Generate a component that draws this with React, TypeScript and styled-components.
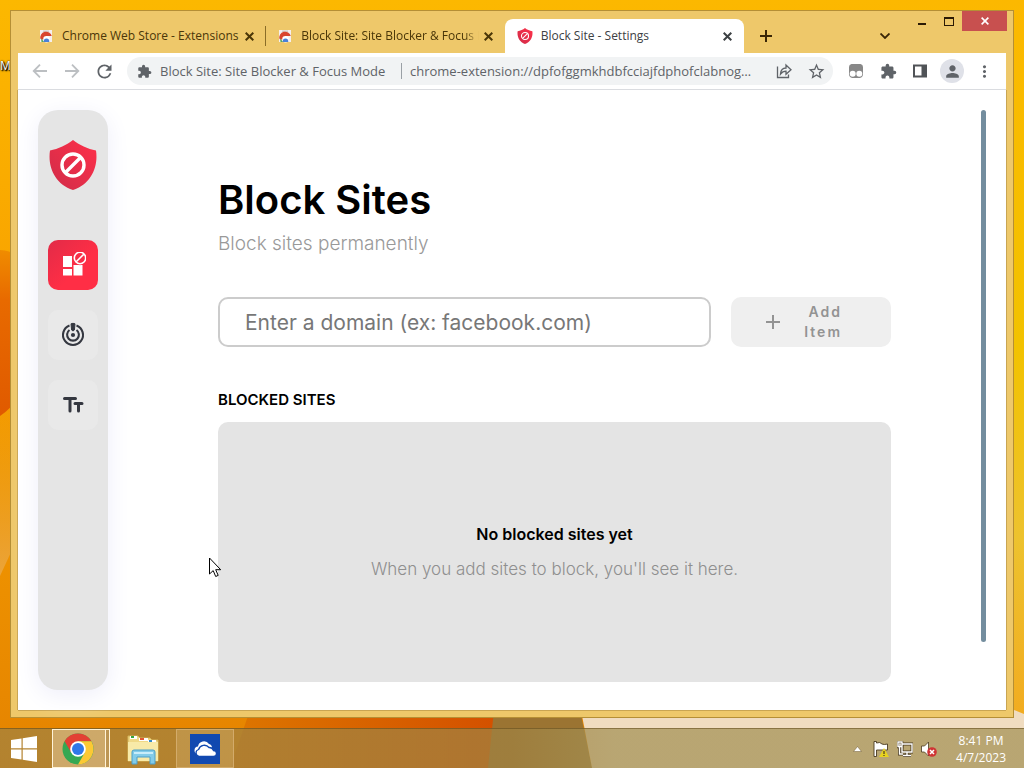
import React from "react";
import styled, { createGlobalStyle } from "styled-components";
import { MdExtension, MdStarBorder, MdMoreVert, MdPerson, MdRefresh } from "react-icons/md";

const Global = createGlobalStyle`
  * { box-sizing: border-box; }
  html, body { margin: 0; padding: 0; }
  button, input { font: inherit; color: inherit; }
  button { border: 0; padding: 0; background: none; cursor: pointer; }
  h1, h2, p { margin: 0; }
`;

const Desktop = styled.div`
  position: relative;
  min-height: 100vh;
  display: flex;
  flex-direction: column;
  overflow: hidden;
  background: #f7a800;
  font-family: "Open Sans", "Noto Sans", sans-serif;
`;

const Wallpaper = styled.svg`
  position: absolute;
  inset: 0;
  width: 100%;
  height: 100%;
`;

const ShortcutLabel = styled.span`
  position: absolute;
  left: 0;
  top: 58px;
  width: 10px;
  overflow: hidden;
  color: #fff;
  font-size: 12px;
  line-height: 16px;
  text-shadow: 1px 1px 1px #000, 1px 1px 2px #000, 0 0 2px #000;
`;

const Workspace = styled.main`
  position: relative;
  flex: 1;
  display: flex;
  padding: 10px;
`;

const BrowserWindow = styled.section`
  flex: 1;
  min-width: 0;
  display: flex;
  flex-direction: column;
  padding: 0 7px 7px;
  border: 1px solid #b58f35;
  background: #eec86a;
`;

const TitleBar = styled.header`
  display: flex;
  height: 42px;
  margin-right: -1px;
  padding-left: 8px;
`;

const TabList = styled.div`
  flex: 0 1 718px;
  min-width: 0;
  display: flex;
  align-items: flex-end;
`;

const Tab = styled.div<{ $active?: boolean }>`
  position: relative;
  flex: 1;
  min-width: 0;
  height: 34px;
  display: flex;
  align-items: center;
  padding: 0 8px 0 12px;
  border-radius: 8px 8px 0 0;
  background: ${(p) => (p.$active ? "#fff" : "transparent")};
  color: ${(p) => (p.$active ? "#3c4043" : "#4a3608")};
`;

const TabDivider = styled.span`
  width: 1px;
  height: 20px;
  margin: 0 -1px 7px 0;
  background: #8a6d27;
`;

const TabTitle = styled.button<{ $fade?: boolean }>`
  flex: 1;
  min-width: 0;
  margin: 0 2px 0 8px;
  overflow: hidden;
  white-space: nowrap;
  text-align: left;
  font-size: 12px;
  line-height: 18px;
  mask-image: ${(p) => (p.$fade ? "linear-gradient(90deg, #000 92%, transparent)" : "none")};
`;

const IconButton = styled.button<{ $size?: number; $color?: string }>`
  flex: none;
  display: grid;
  place-items: center;
  width: ${(p) => p.$size ?? 16}px;
  height: ${(p) => p.$size ?? 16}px;
  color: ${(p) => p.$color ?? "inherit"};
`;

const TabTools = styled.div`
  flex: 1;
  display: flex;
  align-items: center;
  justify-content: space-between;
  padding: 8px 13px 0 8px;
  color: #3a2606;
`;

const WindowControls = styled.div`
  display: flex;
  align-items: flex-start;
  color: #2b1a04;
`;

const WindowButton = styled.button<{ $close?: boolean }>`
  display: grid;
  place-items: center;
  width: ${(p) => (p.$close ? 45 : 27)}px;
  height: 20px;
  background: ${(p) => (p.$close ? "#c8504f" : "transparent")};
  color: ${(p) => (p.$close ? "#fff" : "inherit")};
`;

const Toolbar = styled.div`
  display: flex;
  align-items: center;
  height: 37px;
  padding: 0 10px 0 7px;
  background: #fff;
  border-bottom: 1px solid #dadce0;
  color: #5f6368;
`;

const NavButtons = styled.div`
  display: flex;
  gap: 2px;
  margin-right: 8px;
`;

const Omnibox = styled.div`
  flex: 1;
  min-width: 0;
  height: 28px;
  display: flex;
  align-items: center;
  gap: 8px;
  padding: 0 5px 0 10px;
  border-radius: 14px;
  background: #f1f3f4;
  font-size: 13px;
  line-height: 20px;
  white-space: nowrap;
`;

const SiteName = styled.span`
  flex: 0 0 242px;
  border-right: 1px solid #9aa0a6;
  line-height: 16px;
`;

const Address = styled.input`
  flex: 1;
  min-width: 0;
  height: 20px;
  margin-right: 8px;
  padding: 0;
  border: 0;
  outline: 0;
  background: transparent;
  text-overflow: ellipsis;
`;

const ToolbarActions = styled.div`
  display: flex;
  align-items: center;
  gap: 8px;
  margin-left: 11px;
`;

const Avatar = styled.button`
  display: grid;
  place-items: center;
  width: 24px;
  height: 24px;
  border-radius: 50%;
  background: #dfe1e8;
`;

const Page = styled.div`
  flex: 1;
  display: flex;
  padding: 20px;
  background: #fff;
  box-shadow: -1px 0 #c9a552, 1px 0 #c9a552, 0 1px #c9a552;
  font-family: Inter, "Liberation Sans", sans-serif;
`;

const Sidebar = styled.nav`
  flex: none;
  width: 70px;
  display: flex;
  flex-direction: column;
  align-items: center;
  gap: 20px;
  padding: 30px 10px;
  border-radius: 20px;
  background: #e5e5e5;
  box-shadow: 0 5px 25px #eeeefa;
`;

const Brand = styled.a`
  height: 50px;
  margin-bottom: 30px;
`;

const NavItem = styled.button<{ $active?: boolean }>`
  display: grid;
  place-items: center;
  width: 50px;
  height: 50px;
  border-radius: 10px;
  color: ${(p) => (p.$active ? "#fff" : "#343740")};
  background: ${(p) => (p.$active ? "linear-gradient(135deg, #e22b48, #ff2e45 60%)" : "#e9e9e9")};
`;

const Content = styled.div`
  flex: 1;
  min-width: 0;
  display: flex;
  flex-direction: column;
  padding: 60px 90px 8px 110px;
`;

const Title = styled.h1`
  font-size: 40px;
  line-height: 60px;
  font-weight: 600;
  color: #000;
`;

const Subtitle = styled.p`
  margin-bottom: 39px;
  font-size: 19px;
  line-height: 28px;
  font-weight: 300;
  color: #999;
`;

const AddForm = styled.form`
  display: flex;
  gap: 20px;
  margin-bottom: 40px;
`;

const DomainInput = styled.input`
  flex: 1;
  min-width: 0;
  height: 50px;
  padding: 0 25px;
  border: 2px solid #ccc;
  border-radius: 10px;
  outline: 0;
  background: #fff;
  font-size: 21px;
  &::placeholder { color: #777; opacity: 1; }
`;

const AddButton = styled.button`
  flex: none;
  width: 160px;
  height: 50px;
  display: flex;
  align-items: center;
  justify-content: space-between;
  padding: 0 49px 0 34px;
  border-radius: 10px;
  background: #efefef;
  color: #939393;
  font-size: 14px;
  line-height: 20px;
  font-weight: 600;
  letter-spacing: 2px;
  text-align: right;
`;

const AddLabel = styled.span`
  width: 44px;
`;

const SectionTitle = styled.h2`
  margin-bottom: 10px;
  font-size: 15px;
  line-height: 25px;
  font-weight: 600;
  color: #000;
`;

const EmptyState = styled.section`
  flex: 1;
  display: flex;
  flex-direction: column;
  align-items: center;
  justify-content: center;
  gap: 10px;
  border-radius: 10px;
  background: #e4e4e4;
  line-height: 25px;
`;

const EmptyTitle = styled.p`
  font-size: 16px;
  font-weight: 600;
  color: #000;
`;

const EmptyText = styled.p`
  font-size: 17px;
  font-weight: 300;
  color: #8f8f8f;
`;

const ScrollThumb = styled.div`
  flex: none;
  width: 5px;
  margin-bottom: 48px;
  border-radius: 3px;
  background: #738d9e;
`;

const Taskbar = styled.footer`
  position: relative;
  height: 40px;
  display: flex;
  align-items: stretch;
  border-top: 1px solid rgba(90, 65, 20, 0.5);
  background: linear-gradient(90deg, rgba(160, 130, 65, 0.72) 50%, rgba(163, 145, 85, 0.72) 60%);
`;

const TaskButton = styled.button<{ $state?: "front" | "open" }>`
  width: ${(p) => (p.$state ? 58 : 48)}px;
  display: grid;
  place-items: center;
  padding-right: ${(p) => (p.$state === "front" ? 6 : 0)}px;
  border: 1px solid ${(p) => (p.$state === "front" ? "#fff3d8" : p.$state === "open" ? "#d3ab6a" : "transparent")};
  background: ${(p) => (p.$state === "front" ? "rgba(255,240,215,.35)" : p.$state === "open" ? "rgba(255,235,200,.16)" : "none")};
  box-shadow: ${(p) => (p.$state === "front" ? "inset -3px 0 #bd9654, inset -4px 0 #fff3d8" : "none")};
`;

const TaskGroup = styled.div`
  flex: 1;
  display: flex;
  & > :nth-child(1) { margin-right: 4px; }
  & > :nth-child(2) { margin-right: 9px; }
  & > :nth-child(3) { margin-right: 9px; }
`;

const Tray = styled.div`
  display: flex;
  align-items: center;
  gap: 8px;
  padding-right: 18px;
`;

const Clock = styled.time`
  margin-left: 11px;
  color: #fff;
  text-align: center;
  font-size: 12px;
  line-height: 17px;
`;

const Cursor = styled.svg`
  position: absolute;
  left: 208px;
  top: 557px;
`;

const Cross = ({ size = 9, weight = 2 }: { size?: number; weight?: number }) => (
  <svg width={size} height={size} viewBox="0 0 9 9" stroke="currentColor" strokeWidth={weight} fill="none">
    <path d="M.7.7l7.6 7.6M8.3.7L.7 8.3" />
  </svg>
);

const StoreIcon = () => (
  <svg width="16" height="16" viewBox="0 0 16 16">
    <path d="M2 2h12v12H2z" fill="#f5efee" />
    <path d="M5 2.5h6v1.5H5z" fill="#d5cdcb" />
    <path d="M2.5 11A5.6 5.6 0 0 1 13.8 8H8.5L6 12z" fill="#d9452f" />
    <path d="M3 10.5L6.5 14H3.5z" fill="#58a55c" />
    <circle cx="8.5" cy="11.3" r="3.3" fill="#fff" />
    <path d="M5.8 14a2.8 2.8 0 1 1 5.4 0z" fill="#4a80d8" />
  </svg>
);

const Shield = ({ size }: { size: number }) => (
  <svg width={size} height={size} viewBox="0 0 50 50">
    <defs>
      <linearGradient id="shield" x1="0" y1="1" x2="1" y2="0">
        <stop offset="0" stopColor="#cf2c49" />
        <stop offset="1" stopColor="#ff3049" />
      </linearGradient>
    </defs>
    <path d="M25 0C31 5 40 9 48 10.500C50.500 27 43 44 25 50C7 44-.5 27 2 10.500C10 9 19 5 25 0Z" fill="url(#shield)" />
    <circle cx="25" cy="25" r="11" fill="none" stroke="#fff" strokeWidth="3.400" />
    <path d="M17.500 32.500L32.500 17.500" stroke="#fff" strokeWidth="3.400" />
  </svg>
);

const BlockGrid = () => (
  <svg width="26" height="26" viewBox="0 0 26 26" fill="currentColor">
    <path d="M3 4h9v11H3zM3 17h9v6.500H3zM13.500 13h9v10.500h-9z" />
    <circle cx="20" cy="6" r="7.200" fill="#f72e47" />
    <circle cx="20" cy="6" r="5.700" fill="none" stroke="currentColor" strokeWidth="1.600" />
    <path d="M16.200 9.800l7.600-7.600" stroke="currentColor" strokeWidth="1.600" />
  </svg>
);

const Focus = () => (
  <svg width="26" height="26" viewBox="0 0 26 26" fill="none" stroke="currentColor" strokeWidth="2.100">
    <path d="M9.500 3.600a10 10 0 1 0 7 0" />
    <path d="M9.500 8a5.900 5.900 0 1 0 7 0" />
    <circle cx="13" cy="13" r="2.100" fill="currentColor" stroke="none" />
    <path d="M11 1.800q2-1 4 0l-.6 6.200q-1.400 2-2.800 0z" fill="currentColor" strokeWidth="1" strokeLinejoin="round" />
  </svg>
);

const TextSize = () => (
  <svg width="22" height="18" viewBox="0 0 22 18" fill="none" stroke="currentColor" strokeLinecap="round">
    <path d="M2.500 2.500h11M8 2.500v12.500" strokeWidth="3" />
    <path d="M13 7.500h7M16.500 7.500v7.500" strokeWidth="3" />
  </svg>
);

const ArrowIcon = ({ right }: { right?: boolean }) => (
  <svg width="16" height="16" viewBox="0 0 16 16" fill="none" stroke="#bcbfc2" strokeWidth="1.800">
    <path d={right ? "M1 8h13M8 1.700L14.300 8L8 14.300" : "M15 8H2M8 1.700L1.700 8L8 14.300"} />
  </svg>
);

const ShareIcon = () => (
  <svg width="16" height="16" viewBox="0 0 16 16" fill="none" stroke="currentColor" strokeWidth="1.300">
    <path d="M1.500 3.500v11h11v-3" />
    <path d="M4.500 11c.3-4 2-6 5.500-6V2l5 4.700L10 11.300V8.200C7.500 8.200 6 9 4.500 11z" />
  </svg>
);

const PandaIcon = () => (
  <svg width="16" height="16" viewBox="0 0 16 16">
    <path d="M3.500 1h9Q15 1.500 15 4v8q-.5 2.500-3 3H4q-2.500-.5-3-3V4Q1 1.500 3.500 1z" fill="#888" />
    <circle cx="4.700" cy="10.800" r="3" fill="#fff" />
    <circle cx="11.300" cy="10.800" r="3" fill="#fff" />
  </svg>
);

const SidePanelIcon = () => (
  <svg width="16" height="16" viewBox="0 0 16 16">
    <path d="M1 1.500h14v13H1z" fill="#505357" />
    <path d="M3 3.500h6.500v9H3z" fill="#fff" />
  </svg>
);

const ChromeIcon = () => (
  <svg width="32" height="32" viewBox="0 0 32 32">
    <circle cx="16" cy="16" r="15.500" fill="#35a852" />
    <path d="M16 .5A15.500 15.500 0 0 1 29.400 8.300H16L9.300 19.800L2.600 8.200A15.500 15.500 0 0 1 16 .5z" fill="#e34034" />
    <path d="M29.400 8.300A15.500 15.500 0 0 1 16 31.500L22.700 19.800L16 8.300z" fill="#fcc934" />
    <circle cx="16" cy="16" r="7.800" fill="#fff" />
    <circle cx="16" cy="16" r="6" fill="#2f78e8" />
  </svg>
);

const FolderIcon = () => (
  <svg width="34" height="32" viewBox="0 0 34 32">
    <path d="M2 3h10l2 2h10l2 2h6v21H2z" fill="#f0d987" stroke="#d3b45b" />
    <path d="M4 3h7v3H4z" fill="#fff" /><path d="M5 3h3v2H5z" fill="#37a63e" />
    <path d="M13 5h9v3h-9z" fill="#fff" /><path d="M14 5h4v2h-4z" fill="#e15635" />
    <path d="M22 7h8v2h-8z" fill="#fff" /><path d="M23 7h3v2h-3z" fill="#348ac5" />
    <path d="M2 9h30v19H2z" fill="#f8eaa8" />
    <path d="M6 31V19q0-2 2-2h19q2 0 2 2v12h-5v-7H11v7z" fill="#83cce9" stroke="#4c9fc7" />
    <path d="M8 19h19v2H8z" fill="#c8edfa" />
  </svg>
);

const CloudIcon = () => (
  <svg width="30" height="30" viewBox="0 0 30 30">
    <path d="M0 0h30v30H0z" fill="#1149b0" />
    <path d="M7.500 20A3.800 3.800 0 0 1 8 12.500A6 6 0 0 1 19 10a4 4 0 0 1 3 4v5z" fill="#fff" />
    <path d="M9 22.500a3.600 3.600 0 0 1-.4-7A6 6 0 0 1 19 13.500a4.500 4.500 0 0 1 4.500 3a3 3 0 0 1 0 6z" fill="#fff" stroke="#1149b0" strokeWidth="1.300" />
  </svg>
);

export default function App() {
  return (
    <Desktop>
      <Global />
      <Wallpaper viewBox="0 0 1024 768" preserveAspectRatio="none" aria-hidden="true">
        <defs>
          <linearGradient id="wall" x1="0" y1="0" x2="0" y2="1">
            <stop offset="0" stopColor="#fcb800" />
            <stop offset=".35" stopColor="#f9a500" />
            <stop offset="1" stopColor="#e58300" />
          </linearGradient>
          <linearGradient id="right" x1="0" y1="0" x2="0" y2="1">
            <stop offset="0" stopColor="#fcb800" />
            <stop offset=".45" stopColor="#f2c200" />
            <stop offset=".7" stopColor="#edc22e" />
            <stop offset="1" stopColor="#f3a51c" />
          </linearGradient>
          <linearGradient id="flame" x1="0" y1="0" x2="1" y2="0">
            <stop offset="0" stopColor="#dd7600" />
            <stop offset="1" stopColor="#d45000" />
          </linearGradient>
          <linearGradient id="petal" x1="0" y1="0" x2="0" y2="1">
            <stop offset="0" stopColor="#f08c00" />
            <stop offset=".3" stopColor="#e86a00" />
            <stop offset="1" stopColor="#e05a00" />
          </linearGradient>
          <linearGradient id="glow" x1="0" y1="0" x2="0" y2="1">
            <stop offset="0" stopColor="#eda018" stopOpacity="0" />
            <stop offset="1" stopColor="#eba43a" />
          </linearGradient>
        </defs>
        <path d="M0 0h1024v768H0z" fill="url(#wall)" />
        <path d="M900 0h124v768H900z" fill="url(#right)" />
        <path d="M0 250Q14 250 20 262V395Q10 410 0 416z" fill="url(#petal)" />
        <path d="M0 416L12 405V550L0 576z" fill="url(#glow)" />
        <path d="M250 710h250v58H230z" fill="url(#flame)" />
        <path d="M494 710h86l12 58H488z" fill="#9b7432" />
        <path d="M581 710h433l10 4v54H592z" fill="#f0dcc0" />
      </Wallpaper>
      <ShortcutLabel>M</ShortcutLabel>
      <Workspace>
        <BrowserWindow>
          <TitleBar>
            <TabList>
              <Tab>
                <StoreIcon />
                <TabTitle>Chrome Web Store - Extensions</TabTitle>
                <IconButton aria-label="Close tab"><Cross /></IconButton>
              </Tab>
              <TabDivider />
              <Tab>
                <StoreIcon />
                <TabTitle $fade>Block Site: Site Blocker &amp; Focus Mode</TabTitle>
                <IconButton aria-label="Close tab"><Cross /></IconButton>
              </Tab>
              <Tab $active>
                <Shield size={16} />
                <TabTitle>Block Site - Settings</TabTitle>
                <IconButton aria-label="Close tab"><Cross /></IconButton>
              </Tab>
            </TabList>
            <TabTools>
              <IconButton $size={28} aria-label="New tab">
                <svg width="12" height="12" viewBox="0 0 12 12" stroke="currentColor" strokeWidth="2"><path d="M6 0v12M0 6h12" /></svg>
              </IconButton>
              <IconButton $size={20} aria-label="Search tabs">
                <svg width="10" height="6" viewBox="0 0 10 6" fill="none" stroke="currentColor" strokeWidth="1.800"><path d="M.5.5L5 5L9.500.5" /></svg>
              </IconButton>
            </TabTools>
            <WindowControls>
              <WindowButton aria-label="Minimize">
                <svg width="8" height="12" viewBox="0 0 8 12"><path d="M0 8h8v2H0z" fill="currentColor" /></svg>
              </WindowButton>
              <WindowButton aria-label="Maximize">
                <svg width="10" height="9" viewBox="0 0 10 9"><path d="M0 0h10v9H0zM1 2v6h8V2z" fill="currentColor" fillRule="evenodd" /></svg>
              </WindowButton>
              <WindowButton $close aria-label="Close"><Cross size={8} weight={1.8} /></WindowButton>
            </WindowControls>
          </TitleBar>
          <Toolbar>
            <NavButtons>
              <IconButton $size={30} aria-label="Back"><ArrowIcon /></IconButton>
              <IconButton $size={30} aria-label="Forward"><ArrowIcon right /></IconButton>
              <IconButton $size={30} aria-label="Reload"><MdRefresh size={21} /></IconButton>
            </NavButtons>
            <Omnibox>
              <MdExtension size={15} />
              <SiteName>Block Site: Site Blocker &amp; Focus Mode</SiteName>
              <Address aria-label="Address" readOnly value="chrome-extension://dpfofggmkhdbfcciajfdphofclabnogo/options.html" />
              <IconButton $size={24} aria-label="Share"><ShareIcon /></IconButton>
              <IconButton $size={24} aria-label="Bookmark"><MdStarBorder size={19} /></IconButton>
            </Omnibox>
            <ToolbarActions>
              <IconButton $size={24} aria-label="Panda extension"><PandaIcon /></IconButton>
              <IconButton $size={24} aria-label="Extensions"><MdExtension size={17} /></IconButton>
              <IconButton $size={24} aria-label="Side panel"><SidePanelIcon /></IconButton>
              <Avatar aria-label="Profile"><MdPerson size={19} /></Avatar>
              <IconButton $size={24} aria-label="Menu"><MdMoreVert size={19} /></IconButton>
            </ToolbarActions>
          </Toolbar>
          <Page>
            <Sidebar>
              <Brand href="#" aria-label="Block Site"><Shield size={50} /></Brand>
              <NavItem $active aria-label="Block sites"><BlockGrid /></NavItem>
              <NavItem aria-label="Focus mode"><Focus /></NavItem>
              <NavItem aria-label="Block by words"><TextSize /></NavItem>
            </Sidebar>
            <Content>
              <Title>Block Sites</Title>
              <Subtitle>Block sites permanently</Subtitle>
              <AddForm onSubmit={(e) => e.preventDefault()}>
                <DomainInput aria-label="Domain" placeholder="Enter a domain (ex: facebook.com)" />
                <AddButton type="submit">
                  <svg width="16" height="16" viewBox="0 0 16 16" stroke="currentColor" strokeWidth="2"><path d="M8 1v14M1 8h14" /></svg>
                  <AddLabel>Add Item</AddLabel>
                </AddButton>
              </AddForm>
              <SectionTitle>BLOCKED SITES</SectionTitle>
              <EmptyState>
                <EmptyTitle>No blocked sites yet</EmptyTitle>
                <EmptyText>When you add sites to block, you'll see it here.</EmptyText>
              </EmptyState>
            </Content>
            <ScrollThumb />
          </Page>
        </BrowserWindow>
      </Workspace>
      <Taskbar>
        <TaskGroup>
          <TaskButton aria-label="Start">
            <svg width="28" height="26" viewBox="0 0 28 26" fill="#fff"><path d="M1 4L11.500 2.500V12.300H1zM12.700 2.300L27 0v12.300H12.700zM1 13.500h10.500v10L1 22zM12.700 13.500H27V26l-14.300-2.300z" /></svg>
          </TaskButton>
          <TaskButton $state="front" aria-label="Google Chrome"><ChromeIcon /></TaskButton>
          <TaskButton aria-label="File Explorer"><FolderIcon /></TaskButton>
          <TaskButton $state="open" aria-label="OneDrive"><CloudIcon /></TaskButton>
        </TaskGroup>
        <Tray>
          <IconButton aria-label="Show hidden icons">
            <svg width="9" height="6" viewBox="0 0 9 6"><path d="M4.500.5L8.500 5.500h-8z" fill="#fff" stroke="#6f5a34" strokeWidth=".5" /></svg>
          </IconButton>
          <IconButton aria-label="Action center">
            <svg width="16" height="16" viewBox="0 0 16 16"><path d="M1 .5h2.500V2Q7 .5 9 3q2 1 5.500 0v6H3.500v6.500H1z" fill="#fff" stroke="#4a3a20" strokeWidth=".9" /><path d="M11 7l5 9H6z" fill="#e8d31f" /><path d="M11 10v3M11 14v1" stroke="#4a3a20" strokeWidth="1.200" /></svg>
          </IconButton>
          <IconButton aria-label="Network">
            <svg width="16" height="16" viewBox="0 0 16 16" fill="none"><path d="M5 3h10v8H5zM10 11v3M6 14.500h8M2.500 6v7H6" stroke="#4a3a20" strokeWidth="3" /><path d="M1 1h4v5H1z" fill="#fff" stroke="#4a3a20" strokeWidth="2.500" /><path d="M5 3h10v8H5zM10 11v3M6 14.500h8M2.500 6v7H6M1 1h4v4.500H1z" stroke="#fff" strokeWidth="1.400" /></svg>
          </IconButton>
          <IconButton aria-label="Volume muted">
            <svg width="16" height="16" viewBox="0 0 16 16"><path d="M.5 5h3l4-4v14l-4-4h-3z" fill="#fff" stroke="#4a3a20" strokeWidth=".8" /><circle cx="11" cy="11" r="4.800" fill="#cf3434" /><path d="M9 9l4 4M13 9l-4 4" stroke="#fff" strokeWidth="1.500" /></svg>
          </IconButton>
          <Clock>8:41 PM<br />4/7/2023</Clock>
        </Tray>
      </Taskbar>
      <Cursor width="14" height="21" viewBox="0 0 14 21" aria-hidden="true">
        <path d="M1.500 1v16l3.700-3.400L7.700 19.500l2.500-1.100-2.500-5.700h5z" fill="#fff" stroke="#000" />
      </Cursor>
    </Desktop>
  );
}
